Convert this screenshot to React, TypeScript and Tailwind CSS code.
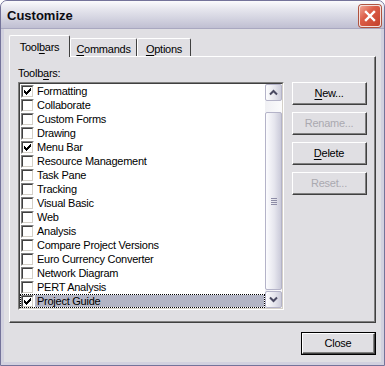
import React from "react";

const rows: [string, boolean][] = [
  ["Formatting", true],
  ["Collaborate", false],
  ["Custom Forms", false],
  ["Drawing", false],
  ["Menu Bar", true],
  ["Resource Management", false],
  ["Task Pane", false],
  ["Tracking", false],
  ["Visual Basic", false],
  ["Web", false],
  ["Analysis", false],
  ["Compare Project Versions", false],
  ["Euro Currency Converter", false],
  ["Network Diagram", false],
  ["PERT Analysis", false],
  ["Project Guide", true],
];

function CheckBox({ checked }: { checked: boolean }) {
  return (
    <div className="w-[13px] h-[13px] shrink-0 border border-t-[#808080] border-l-[#808080] border-b-white border-r-white">
      <div className="w-full h-full bg-white border border-t-[#404040] border-l-[#404040] border-b-[#d4d0c8] border-r-[#d4d0c8] flex items-center justify-center">
        {checked && (
          <svg width="7" height="7" viewBox="0 0 7 7" shapeRendering="crispEdges">
            <path
              d="M0 2h1v3H0z M1 3h1v3H1z M2 4h1v3H2z M3 3h1v3H3z M4 2h1v3H4z M5 1h1v3H5z M6 0h1v3H6z"
              fill="#000"
            />
          </svg>
        )}
      </div>
    </div>
  );
}

function Arrow({ up }: { up: boolean }) {
  return (
    <svg width="9" height="7" viewBox="0 0 9 7">
      <path
        d={up ? "M1 5.5 L4.5 2 L8 5.5" : "M1 1.5 L4.5 5 L8 1.5"}
        stroke="#4a4a62"
        strokeWidth="2"
        fill="none"
      />
    </svg>
  );
}

function ScrollBtn({ up }: { up: boolean }) {
  return (
    <div className="h-[17px] w-[17px] rounded-[2px] border border-[#b4b3c8] bg-[linear-gradient(to_right,#fdfdfe,#e4e4ec_60%,#cdcddb)] flex items-center justify-center">
      <Arrow up={up} />
    </div>
  );
}

function Btn({
  children,
  disabled,
  isDefault,
}: {
  children: React.ReactNode;
  disabled?: boolean;
  isDefault?: boolean;
}) {
  const face = (
    <div className="w-full h-full border border-t-white border-l-white border-r-[#404040] border-b-[#404040]">
      <div
        className={
          "w-full h-full border-r border-b border-r-[#808080] border-b-[#808080] flex items-center justify-center leading-[14px] " +
          (disabled ? "text-[#aaa9b0]" : "text-black")
        }
      >
        {children}
      </div>
    </div>
  );
  if (isDefault) {
    return <div className="w-[75px] h-[23px] border border-black">{face}</div>;
  }
  return <div className="w-[75px] h-[23px]">{face}</div>;
}

function U({ children }: { children: React.ReactNode }) {
  return <span className="underline underline-offset-[2px] decoration-1">{children}</span>;
}

export default function App() {
  return (
    <div className="w-[385px] h-[366px] bg-white font-['Liberation_Sans',Arial,sans-serif] text-[11px] tracking-[-0.25px] text-black select-none">
      <div className="w-full h-full flex flex-col rounded-t-[7px] border border-[#74739a] bg-[#d2d1df] overflow-hidden">
        {/* Title bar */}
        <div className="h-[28px] shrink-0 flex items-start justify-between pl-[6px] pr-[3px] bg-[linear-gradient(to_bottom,#fbfbfd_0%,#e9e9f0_25%,#d6d6e2_60%,#c0bfd2_100%)] border-b border-[#a9a8c0]">
          <span className="mt-[7px] font-bold text-[13px] leading-[15px] tracking-[0px] text-[#0c0c12]">Customize</span>
          <div className="mt-[4px] w-[22px] h-[22px] rounded-[3px] border border-[#f4e0dc] bg-[linear-gradient(135deg,#f0a595_0%,#dc5d47_40%,#c3412c_100%)] flex items-center justify-center shadow-[0_0_0_1px_#b0533f]">
            <svg width="14" height="14" viewBox="0 0 14 14">
              <path d="M3 3 L11 11 M11 3 L3 11" stroke="#fff" strokeWidth="2.4" strokeLinecap="square" />
            </svg>
          </div>
        </div>

        {/* Body */}
        <div className="flex-1 mx-[3px] mb-[3px] bg-[#e0dfe3] flex flex-col pt-[6px] px-[5px]">
          {/* Tabs */}
          <div className="h-[21px] flex items-end shrink-0">
            <div className="relative z-10 -mb-px w-[61px] h-[22px] bg-[#e0dfe3] border-l border-t border-r border-l-white border-t-white border-r-[#404040] rounded-t-[2px] flex items-start justify-center pt-[4px] leading-[14px]">
              <span>
                Tool<U>b</U>ars
              </span>
            </div>
            <div className="w-[67px] h-[18px] border-l border-t border-r border-l-white border-t-white border-r-[#404040] rounded-t-[2px] flex items-start justify-center pt-[3px] leading-[14px]">
              <span>
                <U>C</U>ommands
              </span>
            </div>
            <div className="w-[54px] h-[18px] border-l border-t border-r border-l-white border-t-white border-r-[#404040] rounded-t-[2px] flex items-start justify-center pt-[3px] leading-[14px]">
              <span>
                <U>O</U>ptions
              </span>
            </div>
          </div>

          {/* Panel */}
          <div className="h-[267px] border border-l-white border-t-white border-r-[#404040] border-b-[#404040]">
            <div className="w-full h-full border-r border-b border-r-[#808080] border-b-[#808080] pl-[8px] pt-[9px]">
              <div className="leading-[14px]">
                Toolb<U>a</U>rs:
              </div>
              <div className="mt-[2px] flex gap-[8px]">
                {/* List box */}
                <div className="w-[266px] h-[228px] border border-t-[#808080] border-l-[#808080] border-b-white border-r-white">
                  <div className="w-full h-full border border-t-[#404040] border-l-[#404040] border-b-[#d4d0c8] border-r-[#d4d0c8] bg-white flex">
                    <div className="flex-1 flex flex-col">
                      {rows.map(([label, checked], i) => {
                        const sel = i === rows.length - 1;
                        return (
                          <div
                            key={label}
                            className={
                              "h-[14px] flex items-center pl-[1px] " +
                              (sel ? "[outline:1px_dotted_#000] [outline-offset:-1px]" : "")
                            }
                          >
                            <CheckBox checked={checked} />
                            <span
                              className={
                                "ml-[1px] pl-[2px] pr-[2px] whitespace-nowrap " +
                                (sel ? "flex-1 bg-[#b3b5c5] mr-[1px] h-[12px] leading-[12px]" : "leading-[14px]")
                              }
                            >
                              {label}
                            </span>
                          </div>
                        );
                      })}
                    </div>
                    {/* Scrollbar */}
                    <div className="w-[17px] flex flex-col bg-[linear-gradient(to_right,#f0f0f4,#fbfbfc)]">
                      <ScrollBtn up />
                      <div className="h-[11px]" />
                      <div className="h-[178px] rounded-[2px] border border-[#b4b3c8] bg-[linear-gradient(to_right,#fcfcfe,#e6e6ee_55%,#cacad9)] flex flex-col items-center justify-center gap-[1px]">
                        <div className="w-[6px] h-[1px] bg-[#8d8ca6]" />
                        <div className="w-[6px] h-[1px] bg-[#8d8ca6]" />
                        <div className="w-[6px] h-[1px] bg-[#8d8ca6]" />
                        <div className="w-[6px] h-[1px] bg-[#8d8ca6]" />
                      </div>
                      <div className="flex-1" />
                      <ScrollBtn up={false} />
                    </div>
                  </div>
                </div>

                {/* Buttons */}
                <div className="flex flex-col gap-[7px]">
                  <Btn>
                    <span>
                      <U>N</U>ew...
                    </span>
                  </Btn>
                  <Btn disabled>
                    <span>Rename...</span>
                  </Btn>
                  <Btn>
                    <span>
                      <U>D</U>elete
                    </span>
                  </Btn>
                  <Btn disabled>
                    <span>Reset...</span>
                  </Btn>
                </div>
              </div>
            </div>
          </div>

          {/* Close row */}
          <div className="mt-[9px] flex justify-end">
            <Btn isDefault>Close</Btn>
          </div>
        </div>
      </div>
    </div>
  );
}
